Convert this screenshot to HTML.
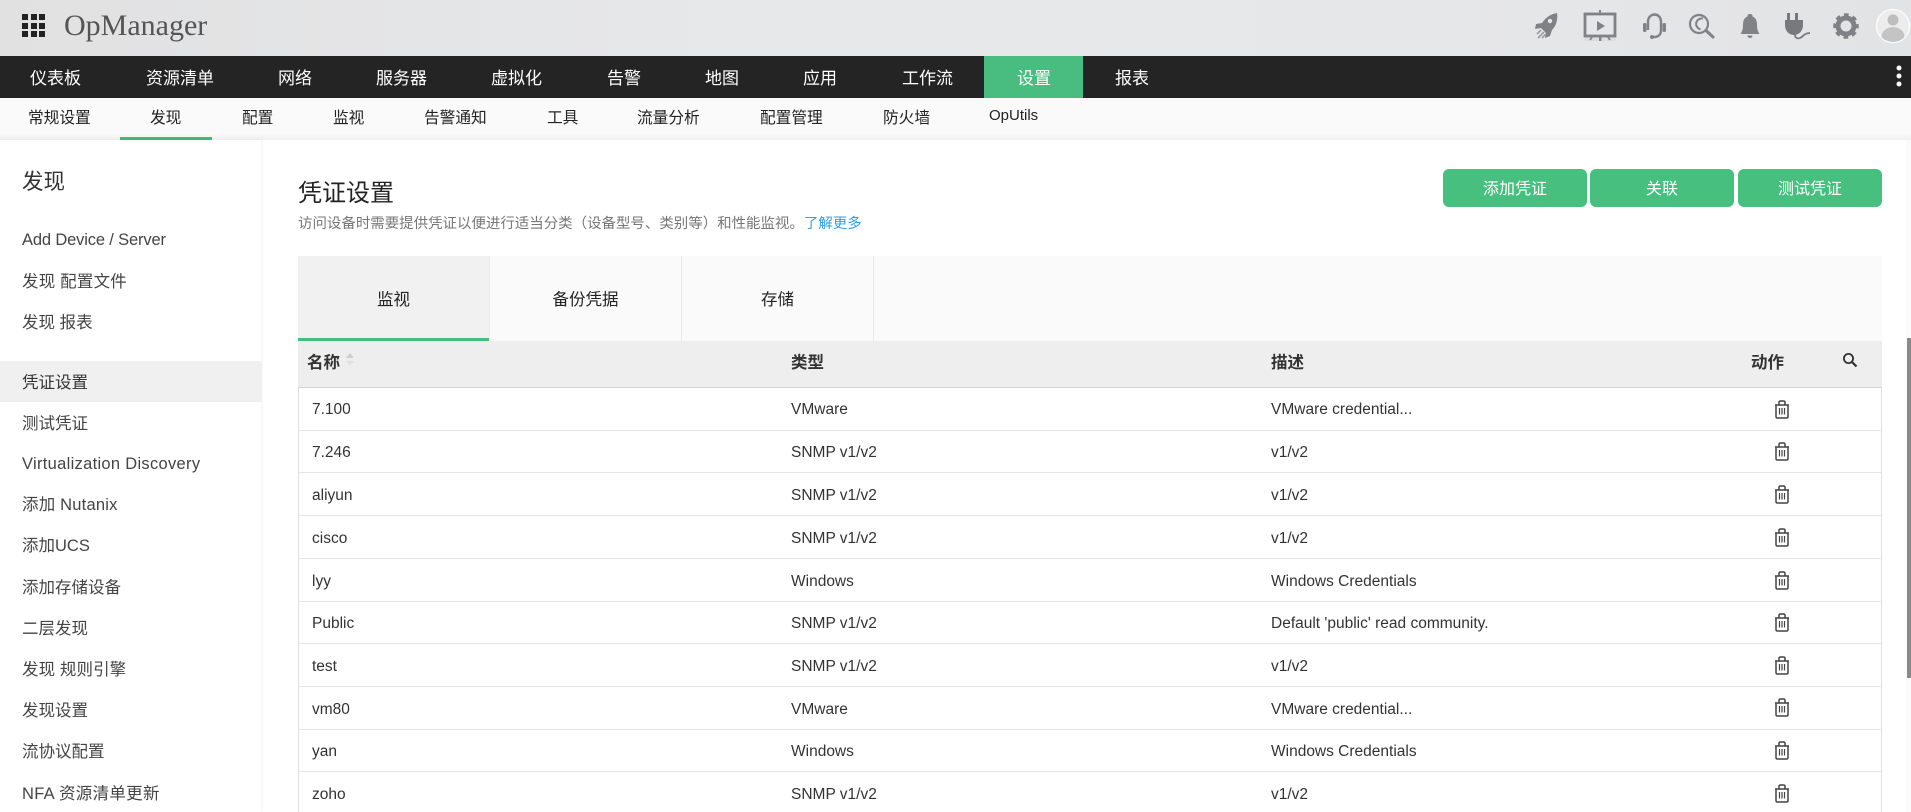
<!DOCTYPE html>
<html><head><meta charset="utf-8"><title>OpManager</title>
<style>
html,body{margin:0;padding:0;width:1911px;height:812px;overflow:hidden;background:#fff}
body{position:relative;font-family:"Liberation Sans","Noto Sans CJK SC",sans-serif;color:#333}
.b{position:absolute}
.t{position:absolute;white-space:nowrap;line-height:20px;height:20px}
.nav{color:#fff;font-size:17px;top:69px}
.sub{color:#222;font-size:15.7px;top:109px}
.side{color:#444;font-size:16.5px;left:22px}
.cell{color:#333;font-size:15.5px}
.h{color:#333;font-size:16.5px;font-weight:bold;top:353px}
.line{position:absolute;left:299px;width:1582px;height:1px;background:#e5e5e5}
.btn{position:absolute;top:169px;height:38px;background:#47bf7f;border-radius:6px;color:#fff;font-size:16px;line-height:42px;text-align:center}
.tab{position:absolute;color:#222;font-size:16.5px;top:290px;line-height:20px;text-align:center}
svg{position:absolute;overflow:visible}
</style></head><body>

<div class="b" style="left:0;top:0;width:1911px;height:56px;background:linear-gradient(90deg,#e1e1e2,#e7e8ea 40%,#e6e7e9 75%,#e2e3e4)"></div>
<div class="t" style="left:64px;top:9px;height:34px;line-height:34px;font-family:'Liberation Serif',serif;font-size:30px;color:#555">OpManager</div>

<svg width="1911" height="56" style="left:0;top:0">
<g fill="#222">
<rect x="22" y="14" width="6" height="6"/><rect x="31" y="14" width="6" height="6"/><rect x="39" y="14" width="6" height="6"/>
<rect x="22" y="23" width="6" height="6"/><rect x="31" y="23" width="6" height="6"/><rect x="39" y="23" width="6" height="6"/>
<rect x="22" y="31" width="6" height="6"/><rect x="31" y="31" width="6" height="6"/><rect x="39" y="31" width="6" height="6"/>
</g>
<!-- rocket -->
<path fill="#7f8284" d="M1557 13c-6 1-11 4-15 10l-6 1-1 5 6-1 5 5-1 5 5-2 2-6c4-4 6-10 5-17z"/>
<circle cx="1550" cy="21" r="2.2" fill="#e4e5e7"/>
<path stroke="#9a9c9e" stroke-width="1.6" fill="none" d="M1537 34l4-4M1538 38l6-6M1542 38l4-4"/>
<!-- presentation -->
<rect x="1584" y="36" width="32" height="5" fill="#dcdddd"/>
<rect x="1585" y="14" width="30" height="22" fill="none" stroke="#808285" stroke-width="2.8"/>
<path fill="#808285" d="M1599 10h2v4h-2zM1597 21l8 5-8 5zM1599 36h2.400v5h-2.400z"/>
<path stroke="#808285" stroke-width="1.800" fill="none" d="M1592 37l-2 3M1608 37l2 3"/>
<!-- headset -->
<path fill="none" stroke="#808285" stroke-width="2.400" d="M1648 30v-8c0-10 13-10 13 0v8c0 5-3 7-7 7h-2"/>
<rect x="1643" y="23" width="3.500" height="9" rx="1.500" fill="#808285"/>
<rect x="1662.500" y="23" width="3.500" height="9" rx="1.500" fill="#808285"/>
<circle cx="1652" cy="37" r="2" fill="#808285"/>
<!-- search -->
<circle cx="1699" cy="24" r="9" fill="none" stroke="#808285" stroke-width="2.200"/>
<path fill="none" stroke="#808285" stroke-width="2" d="M1703 18.500c-7-1-10 8-2.500 11"/>
<path stroke="#808285" stroke-width="3" stroke-linecap="round" d="M1706 30.500l7 6.500"/>
<!-- bell -->
<path fill="#808285" d="M1750 14c2 0 2.500 1 2.500 2.500 3 1 4.500 4 4.500 8 0 5 1 7 2.500 9.500h-19c1.500-2.500 2.500-4.500 2.500-9.500 0-4 1.500-7 4.500-8 0-1.500.500-2.500 2.500-2.500z"/>
<path fill="#808285" d="M1747.500 35.500h5c0 1.500-1 2.500-2.500 2.500s-2.500-1-2.500-2.500z"/>
<!-- plug -->
<path fill="#777a7c" d="M1787 13h3v7h5v-7h3v7h5v5c0 6-4 10-9 10s-9-4-9-10v-5h2z"/>
<path fill="none" stroke="#777a7c" stroke-width="1.800" d="M1795 35c0 3 3 4 5 3 3-1 4-5 10-5"/>
<!-- gear -->
<circle cx="1846" cy="26" r="8" fill="none" stroke="#7f8284" stroke-width="5"/>
<circle cx="1846" cy="26" r="11" fill="none" stroke="#7f8284" stroke-width="3.500" stroke-dasharray="4.600 4.040" stroke-dashoffset="2.300"/>
<!-- avatar -->
<clipPath id="av"><circle cx="1893" cy="26" r="16"/></clipPath>
<circle cx="1893" cy="26" r="16.500" fill="#ececec" stroke="#fafafa" stroke-width="1.500"/>
<circle cx="1893" cy="20" r="5.500" fill="#bdbdbd"/>
<ellipse cx="1893" cy="37" rx="11.500" ry="10" fill="#c4c4c4" clip-path="url(#av)"/>
</svg>

<div class="b" style="left:0;top:56px;width:1911px;height:42px;background:#242424"></div>
<div class="b" style="left:984px;top:56px;width:99px;height:42px;background:#49bd80"></div>
<div class="t nav" style="left:30px">仪表板</div>
<div class="t nav" style="left:146px">资源清单</div>
<div class="t nav" style="left:278px">网络</div>
<div class="t nav" style="left:376px">服务器</div>
<div class="t nav" style="left:491px">虚拟化</div>
<div class="t nav" style="left:607px">告警</div>
<div class="t nav" style="left:705px">地图</div>
<div class="t nav" style="left:803px">应用</div>
<div class="t nav" style="left:902px">工作流</div>
<div class="t nav" style="left:1017px">设置</div>
<div class="t nav" style="left:1115px">报表</div>
<svg width="6" height="24" style="left:1896px;top:64px"><circle cx="3" cy="4" r="2.500" fill="#fff"/><circle cx="3" cy="12" r="2.500" fill="#fff"/><circle cx="3" cy="20" r="2.500" fill="#fff"/></svg>

<div class="b" style="left:0;top:98px;width:1911px;height:42px;background:linear-gradient(180deg,#fafafa 0,#fafafa 85%,#efefef 100%)"></div>
<div class="b" style="left:120px;top:137px;width:92px;height:3px;background:#45b87c"></div>
<div class="t sub" style="left:28px">常规设置</div>
<div class="t sub" style="left:150px">发现</div>
<div class="t sub" style="left:242px">配置</div>
<div class="t sub" style="left:333px">监视</div>
<div class="t sub" style="left:424px">告警通知</div>
<div class="t sub" style="left:547px">工具</div>
<div class="t sub" style="left:637px">流量分析</div>
<div class="t sub" style="left:760px">配置管理</div>
<div class="t sub" style="left:883px">防火墙</div>
<div class="t sub" style="left:989px;top:106px;font-size:15px">OpUtils</div>

<!-- sidebar -->
<div class="b" style="left:0;top:140px;width:261px;height:672px;background:#fff;box-shadow:1px 0 3px rgba(0,0,0,.05)"></div>
<div class="b" style="left:0;top:361px;width:262px;height:41px;background:#f0f0f1"></div>
<div class="t" style="left:22px;top:172px;font-size:21.5px;color:#333">发现</div>
<div class="t side" style="top:230px;letter-spacing:-.15px">Add Device / Server</div>
<div class="t side" style="top:272px;letter-spacing:.2px">发现 配置文件</div>
<div class="t side" style="top:313px">发现 报表</div>
<div class="t side" style="top:373px;color:#333">凭证设置</div>
<div class="t side" style="top:414px">测试凭证</div>
<div class="t side" style="top:454px;letter-spacing:.3px">Virtualization Discovery</div>
<div class="t side" style="top:495px;letter-spacing:.2px">添加 Nutanix</div>
<div class="t side" style="top:536px">添加UCS</div>
<div class="t side" style="top:578px">添加存储设备</div>
<div class="t side" style="top:619px">二层发现</div>
<div class="t side" style="top:660px;letter-spacing:.1px">发现 规则引擎</div>
<div class="t side" style="top:701px">发现设置</div>
<div class="t side" style="top:742px">流协议配置</div>
<div class="t side" style="top:784px;letter-spacing:.3px">NFA 资源清单更新</div>

<!-- title -->
<div class="t" style="left:298px;top:184px;font-size:24px;color:#222">凭证设置</div>
<div class="t" style="left:298px;top:214px;font-size:14.46px;color:#777">访问设备时需要提供凭证以便进行适当分类（设备型号、类别等）和性能监视。<span style="color:#2f9fe8">了解更多</span></div>
<div class="btn" style="left:1443px;width:144px">添加凭证</div>
<div class="btn" style="left:1590px;width:144px">关联</div>
<div class="btn" style="left:1738px;width:144px">测试凭证</div>

<!-- tabs -->
<div class="b" style="left:298px;top:256px;width:1584px;height:85px;background:#fafafa"></div>
<div class="b" style="left:298px;top:256px;width:191px;height:85px;background:#f1f1f1"></div>
<div class="b" style="left:298px;top:338px;width:191px;height:3px;background:#45bd7d"></div>
<div class="b" style="left:489px;top:256px;width:1px;height:85px;background:#eee"></div>
<div class="b" style="left:681px;top:256px;width:1px;height:85px;background:#eaeaea"></div>
<div class="b" style="left:873px;top:256px;width:1px;height:85px;background:#eaeaea"></div>
<div class="tab" style="left:298px;width:191px">监视</div>
<div class="tab" style="left:490px;width:191px">备份凭据</div>
<div class="tab" style="left:682px;width:191px">存储</div>

<!-- table -->
<div class="b" style="left:298px;top:341px;width:1px;height:471px;background:#e0e0e0"></div>
<div class="b" style="left:1881px;top:341px;width:1px;height:471px;background:#e0e0e0"></div>
<div class="b" style="left:298px;top:341px;width:1584px;height:46px;background:#eeeeee"></div>
<div class="b" style="left:298px;top:387px;width:1584px;height:1px;background:#d4d4d4"></div>
<div class="t h" style="left:307px">名称</div>
<svg width="10" height="16" style="left:345px;top:352px"><path d="M1 6l4-5 4 5z" fill="#cfcfcf"/><path d="M1 9l4 5 4-5z" fill="#e2e2e2"/></svg>
<div class="t h" style="left:791px">类型</div>
<div class="t h" style="left:1271px">描述</div>
<div class="t h" style="left:1751px">动作</div>
<svg width="16" height="16" style="left:1842px;top:352px"><circle cx="6.500" cy="6.500" r="4.600" fill="none" stroke="#333" stroke-width="1.800"/><path d="M10 10l4.500 4.500" stroke="#333" stroke-width="2.200"/></svg>

<div class="line" style="top:430px"></div><div class="line" style="top:472px"></div><div class="line" style="top:515px"></div><div class="line" style="top:558px"></div><div class="line" style="top:601px"></div><div class="line" style="top:643px"></div><div class="line" style="top:686px"></div><div class="line" style="top:729px"></div><div class="line" style="top:771px"></div>

<div class="t cell" style="left:312px;top:400px">7.100</div><div class="t cell" style="left:791px;top:400px">VMware</div><div class="t cell" style="left:1271px;top:400px">VMware credential...</div>
<div class="t cell" style="left:312px;top:443px">7.246</div><div class="t cell" style="left:791px;top:443px">SNMP v1/v2</div><div class="t cell" style="left:1271px;top:443px">v1/v2</div>
<div class="t cell" style="left:312px;top:486px">aliyun</div><div class="t cell" style="left:791px;top:486px">SNMP v1/v2</div><div class="t cell" style="left:1271px;top:486px">v1/v2</div>
<div class="t cell" style="left:312px;top:529px">cisco</div><div class="t cell" style="left:791px;top:529px">SNMP v1/v2</div><div class="t cell" style="left:1271px;top:529px">v1/v2</div>
<div class="t cell" style="left:312px;top:572px">lyy</div><div class="t cell" style="left:791px;top:572px">Windows</div><div class="t cell" style="left:1271px;top:572px">Windows Credentials</div>
<div class="t cell" style="left:312px;top:614px">Public</div><div class="t cell" style="left:791px;top:614px">SNMP v1/v2</div><div class="t cell" style="left:1271px;top:614px">Default 'public' read community.</div>
<div class="t cell" style="left:312px;top:657px">test</div><div class="t cell" style="left:791px;top:657px">SNMP v1/v2</div><div class="t cell" style="left:1271px;top:657px">v1/v2</div>
<div class="t cell" style="left:312px;top:700px">vm80</div><div class="t cell" style="left:791px;top:700px">VMware</div><div class="t cell" style="left:1271px;top:700px">VMware credential...</div>
<div class="t cell" style="left:312px;top:742px">yan</div><div class="t cell" style="left:791px;top:742px">Windows</div><div class="t cell" style="left:1271px;top:742px">Windows Credentials</div>
<div class="t cell" style="left:312px;top:785px">zoho</div><div class="t cell" style="left:791px;top:785px">SNMP v1/v2</div><div class="t cell" style="left:1271px;top:785px">v1/v2</div>

<svg width="1911" height="812" style="left:0;top:0;pointer-events:none">
<defs><g id="tr" fill="none" stroke="#444" stroke-width="1.500"><path d="M-7-5h14M-3-5v-2.500c0-1 .7-1.500 1.500-1.500h3c.8 0 1.500.5 1.500 1.500v2.500"/><path d="M-6-5v11.500c0 1 .7 1.500 1.500 1.500h9c.8 0 1.500-.5 1.500-1.500v-11.500"/><path d="M-2.500-2v6.500M0-2v6.500M2.500-2v6.500" stroke-width="1.200"/></g></defs>
<use href="#tr" x="1782" y="410"/><use href="#tr" x="1782" y="452"/><use href="#tr" x="1782" y="495"/><use href="#tr" x="1782" y="538"/><use href="#tr" x="1782" y="581"/><use href="#tr" x="1782" y="623"/><use href="#tr" x="1782" y="666"/><use href="#tr" x="1782" y="708"/><use href="#tr" x="1782" y="751"/><use href="#tr" x="1782" y="794"/>
</svg>

<!-- scrollbar -->
<div class="b" style="left:1906px;top:140px;width:5px;height:672px;background:#fbfbfb"></div>
<div class="b" style="left:1907px;top:338px;width:4px;height:340px;background:#8a8a8a"></div>
</body></html>
